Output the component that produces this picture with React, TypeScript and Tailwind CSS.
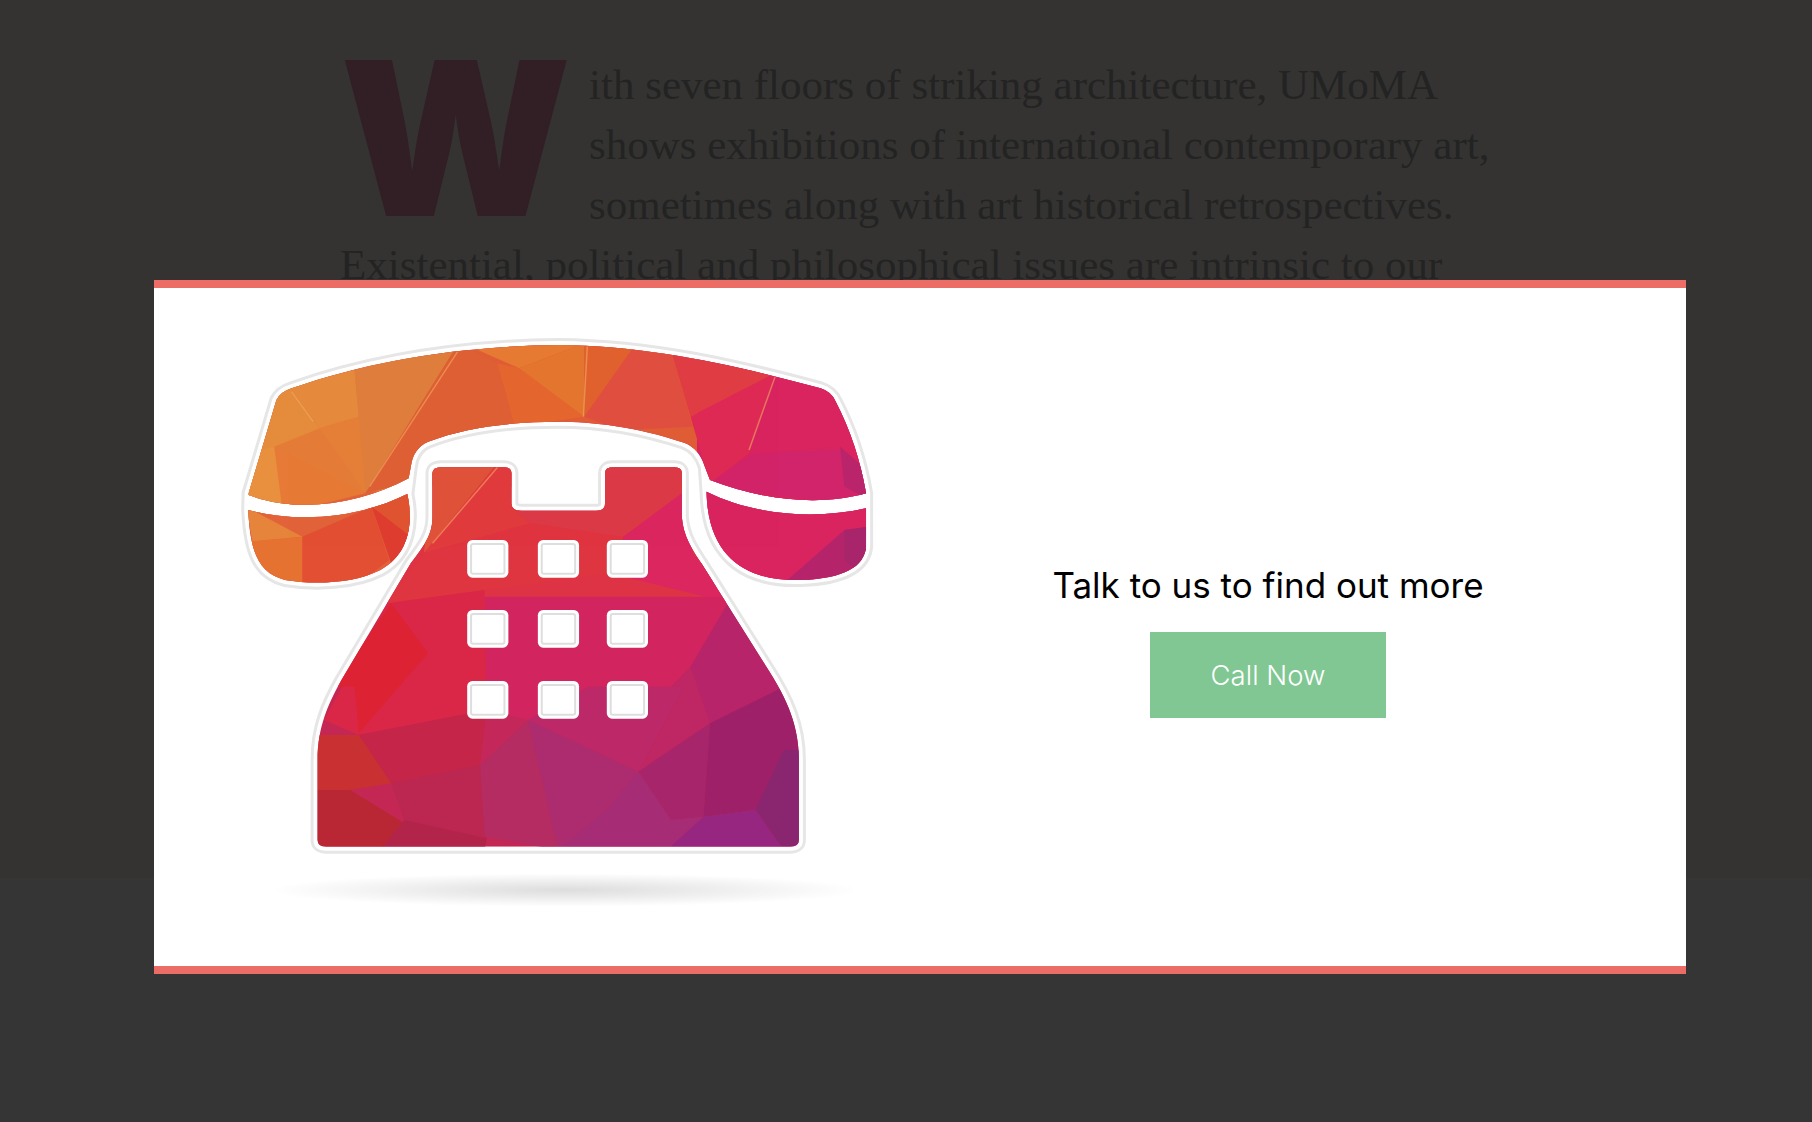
const HANDSET_TOP =
  'M66 520L130 240Q140 215 165 205C350 120 560 78 780 75C1000 78 1200 140 1385 205Q1410 215 1420 245Q1470 370 1490 520C1380 560 1250 540 1130 480L1118 440Q1105 385 1070 368C960 320 860 305 780 305C680 305 570 320 480 365Q445 385 440 440L435 475C320 555 180 580 66 525Z';
const HANDSET_LEFT =
  'M65 570C180 610 320 595 432 522C445 600 440 700 370 750C310 790 220 795 150 780C90 760 70 700 65 570Z';
const HANDSET_RIGHT =
  'M1122 515C1230 585 1370 600 1490 565L1490 680C1485 740 1440 775 1340 780C1230 785 1125 730 1122 515Z';
const HANDSET_OUTLINE =
  'M66 520L130 240Q140 215 165 205C350 120 560 78 780 75C1000 78 1200 140 1385 205Q1410 215 1420 245Q1470 370 1490 520L1490 680C1485 740 1440 775 1340 780C1230 785 1125 730 1122 515L1118 440Q1105 385 1070 368C960 320 860 305 780 305C680 305 570 320 480 365Q445 385 440 440L432 522C445 600 440 700 370 750C310 790 220 795 150 780C90 760 70 700 65 570Z';
const BODY =
  'M490 460Q490 442 510 442L655 442Q672 442 672 460L672 550Q672 572 695 572L868 572Q888 572 888 550L888 460Q888 442 905 442L1048 442Q1065 442 1065 460L1065 590C1068 650 1090 690 1110 730L1260 1040C1310 1140 1335 1220 1335 1320L1335 1560Q1335 1580 1315 1580L245 1580Q225 1580 225 1560L225 1320C225 1220 250 1150 280 1080L440 730C475 670 490 640 490 590Z';

const FACETS: [string, string][] = [
  ['50,190 450,60 450,600 50,600', '#e47c38'],
  ['50,560 450,500 450,800 50,800', '#e2623a'],
  ['450,60 1100,60 1100,500 450,500', '#e05c35'],
  ['1100,60 1510,60 1510,800 1100,800', '#d6255f'],
  ['470,430 1080,430 1180,850 385,850', '#de3345'],
  ['60,200 160,200 215,300 230,325 125,380 60,560', '#e48c3c'],
  ['160,200 310,150 320,290 230,325', '#e58a3c'],
  ['310,150 550,70 335,520 320,290', '#de7e3c'],
  ['230,325 320,290 335,520', '#e57f38'],
  ['125,380 335,520 145,580 125,500', '#e67a36'],
  ['60,400 125,380 145,580 60,540', '#e8903e'],
  ['550,70 335,520 430,490 680,320 640,130', '#de5f34'],
  ['560,70 690,145 840,70', '#e67a34'],
  ['640,130 690,145 840,290 680,320', '#e4672f'],
  ['690,145 840,70 840,290', '#e4752f'],
  ['840,70 960,70 840,290', '#e0622f'],
  ['960,70 1040,90 1090,320 920,330 840,290', '#df4f40'],
  ['1040,90 1280,160 1085,290', '#e03c44'],
  ['1085,290 1280,160 1220,400 1130,490', '#df2a55'],
  ['1280,160 1420,190 1500,510 1430,380 1230,400', '#d9245f'],
  ['1230,400 1430,390 1500,540 1250,560 1130,490', '#d2246a'],
  ['1430,380 1500,460 1500,540 1440,500', '#b9246a'],
  ['60,560 190,650 75,665', '#e5843a'],
  ['60,665 190,650 190,800 90,800', '#e67232'],
  ['190,650 350,560 390,720 320,790 190,800', '#e24f33'],
  ['350,560 440,640 400,750', '#de3c30'],
  ['350,560 440,510 440,650', '#e05431'],
  ['1110,500 1500,560 1500,640 1300,790 1110,790', '#d92460'],
  ['1300,790 1440,630 1500,620 1500,790', '#b5246a'],
  ['1440,630 1500,620 1500,790 1440,720', '#a9256b'],
  ['480,430 640,430 470,700 480,600', '#e0523a'],
  ['640,430 680,430 680,570 715,610 470,700', '#e03b3e'],
  ['715,610 680,570 880,570 880,430 1075,430 1075,510 930,650', '#dd3a48'],
  ['930,650 1075,510 1090,700 1180,850 900,760', '#db2660'],
  ['470,700 715,610 930,650 900,760 385,850', '#df3540'],
  ['610,830 1180,830 1085,1040 1040,1100 850,1100 710,1200 615,1170', '#d22560'],
  ['385,850 610,810 615,1170 320,1245 240,1200 290,1080', '#da2747'],
  ['395,850 480,1000 320,1240 310,1100 260,1100', '#dd2333'],
  ['1180,830 1300,1100 1130,1210 1085,1040', '#b8246a'],
  ['320,1245 615,1170 600,1335 395,1390', '#c52548'],
  ['215,1245 320,1245 395,1390 300,1410 215,1410', '#c83032'],
  ['215,1410 300,1410 425,1510 370,1590 215,1590', '#ba2734'],
  ['395,1390 600,1335 615,1555 425,1500', '#bb2750'],
  ['600,1335 710,1200 780,1590 610,1550', '#b42c62'],
  ['615,1170 710,1200 600,1335', '#c4285a'],
  ['710,1200 965,1355 895,1465 780,1590', '#ad2c70'],
  ['710,1200 850,1100 1070,1100 965,1355', '#bc2868'],
  ['1040,1100 1085,1040 1130,1210 965,1355 1070,1100', '#be2664'],
  ['965,1355 1130,1210 1115,1490 1040,1500', '#a7256a'],
  ['1130,1210 1300,1100 1345,1300 1235,1470 1115,1490', '#9d2068'],
  ['965,1355 1040,1500 1115,1490 1030,1590 780,1590 895,1465', '#a62d75'],
  ['1115,1490 1235,1470 1300,1590 1030,1590', '#972680'],
  ['1235,1470 1300,1290 1345,1290 1345,1590 1300,1590', '#8a2670'],
  ['425,1500 615,1555 610,1590 370,1590', '#b3244a'],
];

const KEY_X = [570, 733, 892];
const KEY_Y = [660, 870, 1083];

function Telephone() {
  return (
    <svg viewBox="0 0 1522 1920" preserveAspectRatio="none" className="h-[640px] w-[660px] shrink-0">
      <defs>
        <clipPath id="phone-clip">
          <path d={HANDSET_TOP} />
          <path d={HANDSET_LEFT} />
          <path d={HANDSET_RIGHT} />
          <path d={BODY} />
        </clipPath>
        <radialGradient id="phone-shadow">
          <stop offset="0%" stopColor="#dddddd" />
          <stop offset="45%" stopColor="#ececec" />
          <stop offset="100%" stopColor="#ffffff" />
        </radialGradient>
      </defs>
      <ellipse cx="795" cy="1710" rx="680" ry="50" fill="url(#phone-shadow)" />
      {[HANDSET_OUTLINE, BODY].map((d) => (
        <path key={d} d={d} fill="#fff" stroke="#e6e6e6" strokeWidth="14" strokeLinejoin="round" vectorEffect="non-scaling-stroke" />
      ))}
      {[HANDSET_OUTLINE, BODY].map((d) => (
        <path key={d} d={d} fill="#fff" stroke="#fff" strokeWidth="8" strokeLinejoin="round" vectorEffect="non-scaling-stroke" />
      ))}
      <g clipPath="url(#phone-clip)">
        <rect x="0" y="0" width="1522" height="1700" fill="#c42753" />
        {FACETS.map(([points, fill]) => (
          <polygon key={points} points={points} fill={fill} />
        ))}
        <path d="M345 500L548 95M165 215L215 305M847 80L838 290M490 670L640 442M1280 170L1220 390" stroke="#f2a863" strokeWidth="1.5" fill="none" opacity="0.6" vectorEffect="non-scaling-stroke" />
      </g>
      {KEY_Y.map((y) =>
        KEY_X.map((x) => (
          <g key={`${x}-${y}`}>
            <rect x={x} y={y} width="95" height="113" rx="12" ry="16" fill="#fff" />
            <rect x={x + 9} y={y + 12} width="77" height="89" rx="5" ry="6" fill="#fff" stroke="#dedede" strokeWidth="2" vectorEffect="non-scaling-stroke" />
          </g>
        )),
      )}
    </svg>
  );
}

export default function App() {
  return (
    <div className="relative h-[1122px] overflow-hidden bg-[#353535]">
      <div className="h-[878px] bg-[#343331] px-[340px] pt-[55px]">
        <p className="w-[1165px] font-['Liberation_Serif',serif] text-[43px] leading-[60px] text-[#232323]">
          <span className="float-left mr-[25px] h-[180px] w-[224px] font-['Inter',sans-serif] text-[214px] leading-[168px] font-black text-[#311f25]">
            W
          </span>
          ith seven floors of striking architecture, UMoMA
          <br />
          shows exhibitions of international contemporary art,
          <br />
          sometimes along with art historical retrospectives.
          <br />
          Existential, political and philosophical issues are intrinsic to our
        </p>
      </div>

      <div className="absolute top-[280px] left-[154px] flex h-[694px] w-[1532px] border-y-8 border-[#ec6d65] bg-white pl-[66px]">
        <div className="pt-[32px]">
          <Telephone />
        </div>
        <div className="flex flex-1 flex-col items-center justify-center pt-[26px] pr-[30px] font-['Inter',sans-serif]">
          <p className="text-[35px] leading-[44px] text-black">Talk to us to find out more</p>
          <button className="mt-[25px] h-[86px] w-[236px] bg-[#80c793] pt-[3px] text-[27.5px] font-light text-white">
            Call Now
          </button>
        </div>
      </div>
    </div>
  );
}
